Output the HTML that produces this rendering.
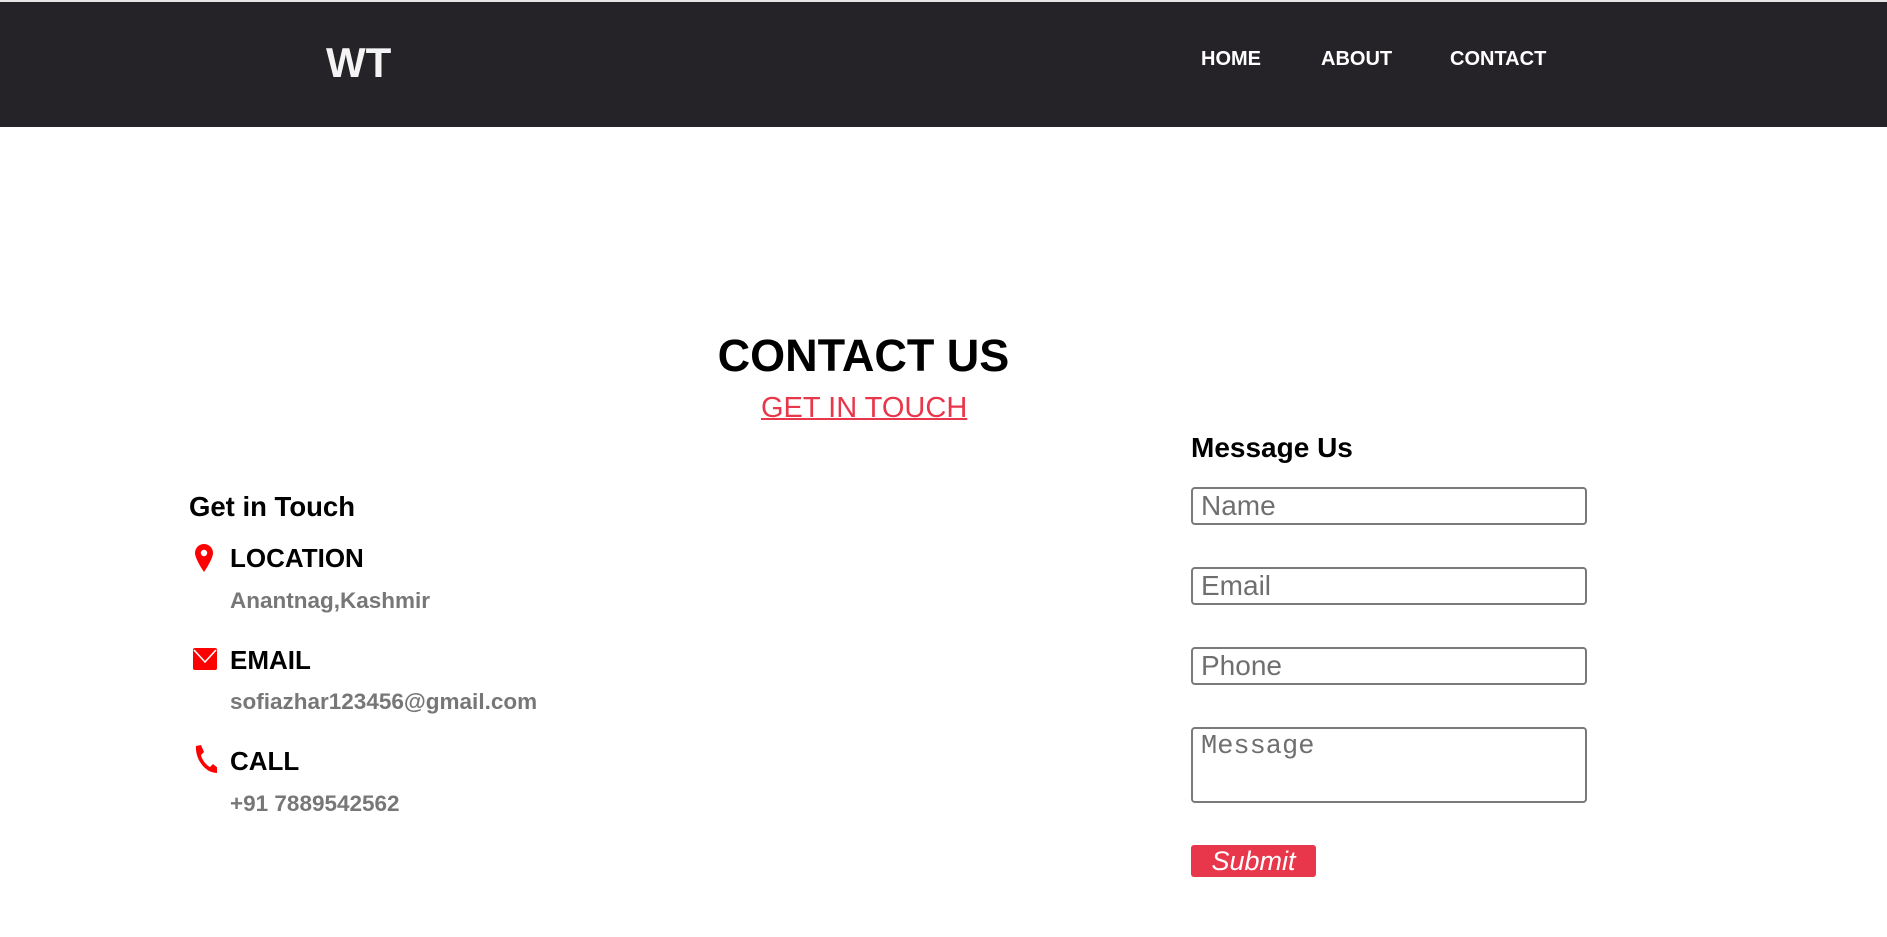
<!DOCTYPE html>
<html><head><meta charset="utf-8"><style>
*{margin:0;padding:0;box-sizing:border-box}
body{width:1887px;height:937px;background:#fff;font-family:"Liberation Sans",sans-serif;position:relative;overflow:hidden}
.nav{position:absolute;left:0;top:2px;width:1887px;height:125px;background:#252328}
.top{position:absolute;left:0;top:0;width:1887px;height:2px;background:#e6e6e6}
.a{position:absolute;white-space:nowrap;line-height:1}
.logo{left:326px;top:42px;font-size:42px;font-weight:bold;color:#f4f4f4}
.nl{top:49px;font-size:20px;font-weight:bold;color:#fff}
h1{position:absolute;left:0;width:1727px;text-align:center;top:333px;font-size:45px;font-weight:bold;line-height:1;color:#000}
.git{left:761px;top:394px;font-size:29px;color:#e8364a;text-decoration:underline;text-decoration-thickness:2px}
.h{font-size:27px;font-weight:bold;color:#000}
.lab{left:230px;font-size:26px;font-weight:bold;color:#000}
.val{left:230px;font-size:22.5px;font-weight:bold;color:#777}
.in{position:absolute;left:1191px;width:396px;height:38px;border:2px solid #7a7a7a;border-radius:4px;font-size:28px;color:#6f6f6f;padding-left:8px;line-height:33px}
.btn{position:absolute;left:1191px;top:845px;width:125px;height:32px;background:#e8364a;border-radius:3px;color:#fff;font-style:italic;font-size:27px;text-align:center;line-height:32px}
svg{position:absolute}
</style></head><body>
<div class="top"></div>
<div class="nav"></div>
<div class="a logo">WT</div>
<div class="a nl" style="left:1201px">HOME</div>
<div class="a nl" style="left:1321px">ABOUT</div>
<div class="a nl" style="left:1450px">CONTACT</div>
<h1>CONTACT US</h1>
<div class="a git">GET IN TOUCH</div>
<div class="a h" style="left:189px;top:493px;font-size:27.5px">Get in Touch</div>
<svg style="left:195px;top:544px" width="18" height="28" viewBox="0 0 18 28"><path d="M9 0C4 0 0 4 0 9c0 6 9 19 9 19s9-13 9-19C18 4 14 0 9 0z" fill="#f00"/><circle cx="9" cy="9" r="3.2" fill="#fff"/></svg>
<div class="a lab" style="left:230px;top:545px">LOCATION</div>
<div class="a val" style="top:590px">Anantnag,Kashmir</div>
<svg style="left:193px;top:648px" width="24" height="22" viewBox="0 0 24 22"><rect x="0" y="0" width="24" height="22" rx="2" fill="#f00"/><path d="M1 2l11 12L23 2" stroke="#fff" stroke-width="1.6" fill="none"/></svg>
<div class="a lab" style="top:647px">EMAIL</div>
<div class="a val" style="top:691px">sofiazhar123456@gmail.com</div>
<svg style="left:193px;top:745px" width="24" height="28" viewBox="0 0 24 28"><path d="M3 1l5-1 3 7-3 3c1 5 5 10 9 12l3-3 5 4-1 5c-12 0-22-14-21-27z" fill="#f00"/></svg>
<div class="a lab" style="top:748px">CALL</div>
<div class="a val" style="top:793px">+91 7889542562</div>
<div class="a h" style="left:1191px;top:434px;font-size:28px">Message Us</div>
<div class="in" style="top:487px">Name</div>
<div class="in" style="top:567px">Email</div>
<div class="in" style="top:647px">Phone</div>
<div class="in" style="top:727px;height:76px;font-family:'Liberation Mono',monospace;font-size:27px;line-height:36px">Message</div>
<div class="btn">Submit</div>
</body></html>
